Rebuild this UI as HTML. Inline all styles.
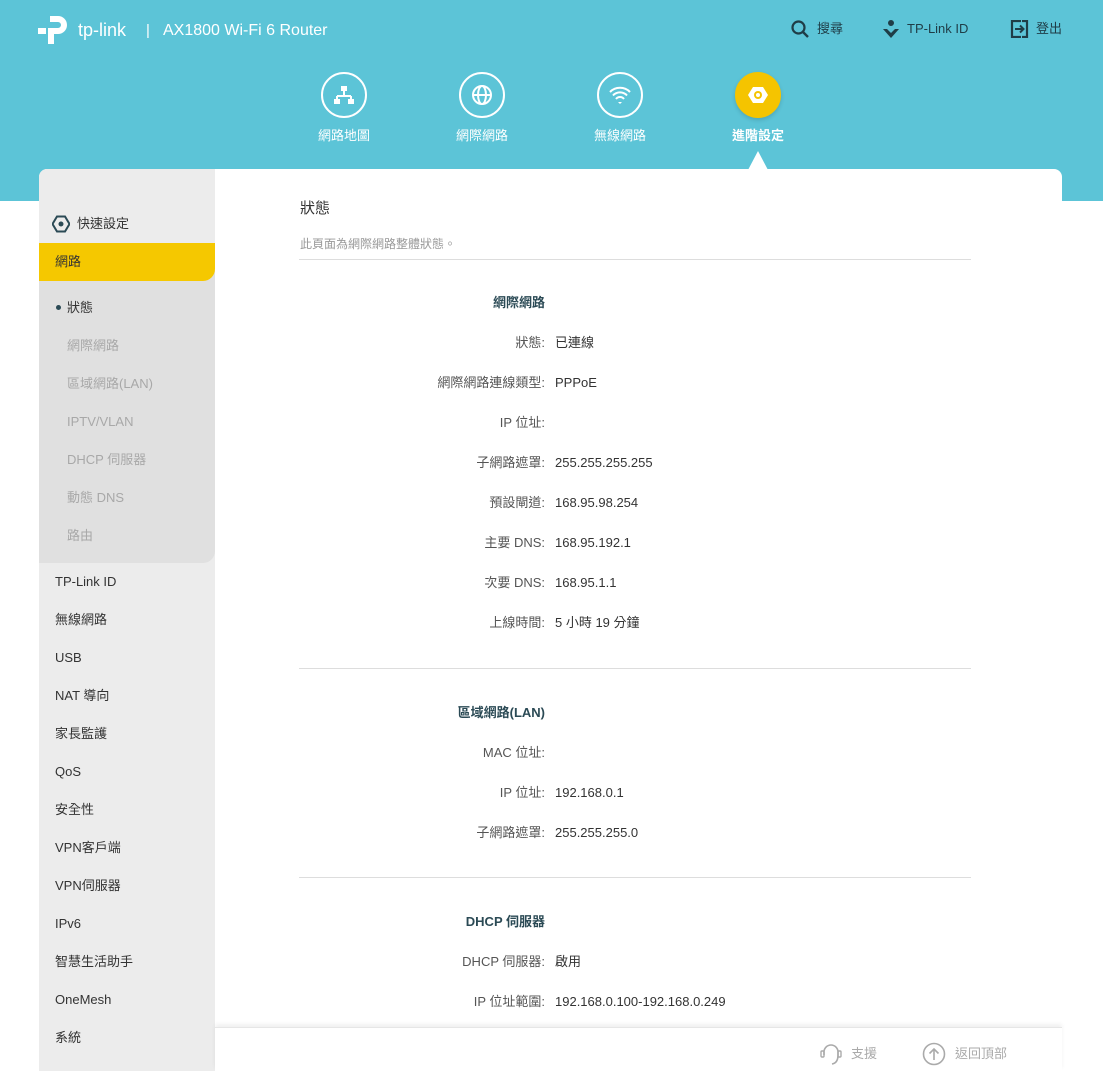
<!DOCTYPE html>
<html><head><meta charset="utf-8"><style>
*{margin:0;padding:0;box-sizing:border-box}
body{width:1103px;height:1071px;overflow:hidden;background:#fff;font-family:"Liberation Sans","Noto Sans CJK TC",sans-serif;position:relative;line-height:16px}
div,span{line-height:16px}
.hdr{position:absolute;left:0;top:0;width:1103px;height:201px;background:#5cc4d7}
.abs{position:absolute}
.wt{color:#fff}
.nav{position:absolute;top:72px;width:120px;text-align:center;color:#fff;font-size:13px}
.nav .c{width:46px;height:46px;border:2px solid #fff;border-radius:50%;margin:0 auto 10px;display:flex;align-items:center;justify-content:center}
.card{position:absolute;left:39px;top:169px;width:1023px;height:902px;background:#fff;border-radius:8px 8px 0 0;overflow:hidden}
.side{position:absolute;left:0;top:0;width:176px;height:902px;background:#ececec}
.sub{position:absolute;left:0;top:74px;width:176px;height:320px;background:#e0e0e0;border-radius:0 0 12px 0}
.si{position:absolute;left:16px;font-size:13px;color:#333}
.ss{position:absolute;left:28px;font-size:13px;color:#a8a8a8}
.row{position:absolute;left:0;width:1103px;height:16px;font-size:13px;color:#333}
.row .l{position:absolute;top:0;right:558px;text-align:right;color:#555}
.row .v{position:absolute;top:0;left:555px}
.h{position:absolute;right:558px;font-size:13px;font-weight:bold;color:#2b4a55}
.hr{position:absolute;left:299px;width:672px;height:1px;background:#ddd}
</style></head><body>
<div class="hdr"></div>
<svg class="abs" style="left:38px;top:14px" width="40" height="32" viewBox="0 0 40 32"><path d="M12 2h8a9 9 0 0 1 0 18h-4v10h-6V14h10a3 3 0 0 0 0-6h-8z" fill="#fff"/><rect x="0" y="14" width="8" height="6" fill="#fff"/></svg>
<div class="abs wt" style="left:78px;top:22px;font-size:18px">tp-link</div>
<div class="abs wt" style="left:146px;top:23px;font-size:15px">|</div>
<div class="abs wt" style="left:163px;top:23px;font-size:16px">AX1800 Wi-Fi 6 Router</div>
<svg class="abs" style="left:791px;top:20px" width="18" height="18"><circle cx="7.5" cy="7.5" r="6" fill="none" stroke="#1f3d47" stroke-width="2.2"/><path d="M12 12l5 5" stroke="#1f3d47" stroke-width="2.4"/></svg>
<div class="abs" style="left:817px;top:21px;font-size:13px;color:#1f3d47">搜尋</div>
<svg class="abs" style="left:882px;top:19px" width="18" height="20"><circle cx="9" cy="4" r="3" fill="#1f3d47"/><path d="M1 10l8 9 8-9-4 0-4 4-4-4z" fill="#1f3d47"/></svg>
<div class="abs" style="left:907px;top:21px;font-size:13px;color:#1f3d47">TP-Link ID</div>
<svg class="abs" style="left:1010px;top:20px" width="19" height="18"><path d="M11 1H2v16h9" fill="none" stroke="#1f3d47" stroke-width="2.2"/><path d="M12 1h5v16h-5" fill="none" stroke="#1f3d47" stroke-width="2.2"/><path d="M5 9h8M10 5.5l3.5 3.5-3.5 3.5" fill="none" stroke="#1f3d47" stroke-width="2"/></svg>
<div class="abs" style="left:1036px;top:21px;font-size:13px;color:#1f3d47">登出</div>

<div class="nav" style="left:284px"><div class="c"><svg width="24" height="22"><rect x="9" y="2" width="6" height="5" fill="#fff"/><path d="M12 7v5M5 12h14M5 12v3M19 12v3" stroke="#fff" stroke-width="2" fill="none"/><rect x="2" y="15" width="6" height="5" fill="#fff"/><rect x="16" y="15" width="6" height="5" fill="#fff"/></svg></div>網路地圖</div>
<div class="nav" style="left:422px"><div class="c"><svg width="24" height="24"><circle cx="12" cy="12" r="9" fill="none" stroke="#fff" stroke-width="2"/><ellipse cx="12" cy="12" rx="4" ry="9" fill="none" stroke="#fff" stroke-width="2"/><path d="M3 12h18" stroke="#fff" stroke-width="2"/></svg></div>網際網路</div>
<div class="nav" style="left:560px"><div class="c"><svg width="24" height="22"><path d="M2 8a14 14 0 0 1 20 0M5 11.5a9.5 9.5 0 0 1 14 0M8 15a5 5 0 0 1 8 0" fill="none" stroke="#fff" stroke-width="2"/><path d="M10 18h4l-2 2z" fill="#fff"/></svg></div>無線網路</div>
<div class="nav" style="left:698px;font-weight:bold"><div class="c" style="background:#f5c400;border-color:#f5c400;box-shadow:0 2px 4px rgba(0,0,0,.15)"><svg width="24" height="24"><path d="M7 4h10l5 8-5 8H7l-5-8z" fill="#fff"/><circle cx="12" cy="12" r="4" fill="#f5c400"/><circle cx="12" cy="12" r="2" fill="#fff"/></svg></div>進階設定</div>
<svg class="abs" style="left:748px;top:151px" width="20" height="19"><path d="M0 19L10 0 20 19z" fill="#fff"/></svg>

<div class="card">
<div class="side">
<div class="sub"></div>
<svg class="abs" style="left:13px;top:46px" width="18" height="18"><path d="M5 1.5h8l4.5 7.5-4.5 7.5H5L.5 9z" fill="none" stroke="#2b4a55" stroke-width="2"/><circle cx="9" cy="9" r="2.5" fill="#2b4a55"/></svg>
<div class="si" style="left:38px;top:47px">快速設定</div>
<div class="abs" style="left:0;top:74px;width:176px;height:38px;background:#f5c800;border-radius:0 0 12px 0"></div>
<div class="si" style="top:85px">網路</div>
<div class="abs" style="left:17px;top:136px;width:5px;height:5px;border-radius:50%;background:#2b4a55"></div>
<div class="ss" style="top:131px;color:#333">狀態</div>
<div class="ss" style="top:169px">網際網路</div>
<div class="ss" style="top:207px">區域網路(LAN)</div>
<div class="ss" style="top:245px">IPTV/VLAN</div>
<div class="ss" style="top:283px">DHCP 伺服器</div>
<div class="ss" style="top:321px">動態 DNS</div>
<div class="ss" style="top:359px">路由</div>
<div class="si" style="top:405px">TP-Link ID</div>
<div class="si" style="top:443px">無線網路</div>
<div class="si" style="top:481px">USB</div>
<div class="si" style="top:519px">NAT 導向</div>
<div class="si" style="top:557px">家長監護</div>
<div class="si" style="top:595px">QoS</div>
<div class="si" style="top:633px">安全性</div>
<div class="si" style="top:671px">VPN客戶端</div>
<div class="si" style="top:709px">VPN伺服器</div>
<div class="si" style="top:747px">IPv6</div>
<div class="si" style="top:785px">智慧生活助手</div>
<div class="si" style="top:823px">OneMesh</div>
<div class="si" style="top:861px">系統</div>
</div>
</div>

<div class="abs" style="left:300px;top:201px;font-size:15px;color:#333">狀態</div>
<div class="abs" style="left:300px;top:236px;font-size:12px;color:#999">此頁面為網際網路整體狀態。</div>
<div class="hr" style="top:259px"></div>

<div class="h" style="top:295px">網際網路</div>
<div class="row" style="top:335px"><span class="l">狀態:</span><span class="v">已連線</span></div>
<div class="row" style="top:375px"><span class="l">網際網路連線類型:</span><span class="v">PPPoE</span></div>
<div class="row" style="top:415px"><span class="l">IP 位址:</span><span class="v"></span></div>
<div class="row" style="top:455px"><span class="l">子網路遮罩:</span><span class="v">255.255.255.255</span></div>
<div class="row" style="top:495px"><span class="l">預設閘道:</span><span class="v">168.95.98.254</span></div>
<div class="row" style="top:535px"><span class="l">主要 DNS:</span><span class="v">168.95.192.1</span></div>
<div class="row" style="top:575px"><span class="l">次要 DNS:</span><span class="v">168.95.1.1</span></div>
<div class="row" style="top:615px"><span class="l">上線時間:</span><span class="v">5 小時 19 分鐘</span></div>
<div class="hr" style="top:668px"></div>
<div class="h" style="top:705px">區域網路(LAN)</div>
<div class="row" style="top:745px"><span class="l">MAC 位址:</span><span class="v"></span></div>
<div class="row" style="top:785px"><span class="l">IP 位址:</span><span class="v">192.168.0.1</span></div>
<div class="row" style="top:825px"><span class="l">子網路遮罩:</span><span class="v">255.255.255.0</span></div>
<div class="hr" style="top:877px"></div>
<div class="h" style="top:914px">DHCP 伺服器</div>
<div class="row" style="top:954px"><span class="l">DHCP 伺服器:</span><span class="v">啟用</span></div>
<div class="row" style="top:994px"><span class="l">IP 位址範圍:</span><span class="v">192.168.0.100-192.168.0.249</span></div>

<div class="abs" style="left:215px;top:1027px;width:847px;height:44px;background:#fff;box-shadow:0 -3px 4px rgba(0,0,0,.06);border-top:1px solid #e6e6e6"></div>
<svg class="abs" style="left:818px;top:1041px" width="26" height="26"><path d="M6 14V11a7 7 0 0 1 14 0v3M20 14q0 8-6 9" fill="none" stroke="#aaa" stroke-width="1.6"/><rect x="3" y="10" width="3" height="6" rx="1" fill="none" stroke="#aaa" stroke-width="1.4"/><rect x="20" y="10" width="3" height="6" rx="1" fill="none" stroke="#aaa" stroke-width="1.4"/></svg>
<div class="abs" style="left:851px;top:1046px;font-size:13px;color:#aaa">支援</div>
<svg class="abs" style="left:922px;top:1042px" width="24" height="24"><circle cx="12" cy="12" r="10.5" fill="none" stroke="#aaa" stroke-width="1.6"/><path d="M12 18V7M7.5 11.5L12 7l4.5 4.5" fill="none" stroke="#aaa" stroke-width="1.6"/></svg>
<div class="abs" style="left:955px;top:1046px;font-size:13px;color:#aaa">返回頂部</div>
</body></html>
